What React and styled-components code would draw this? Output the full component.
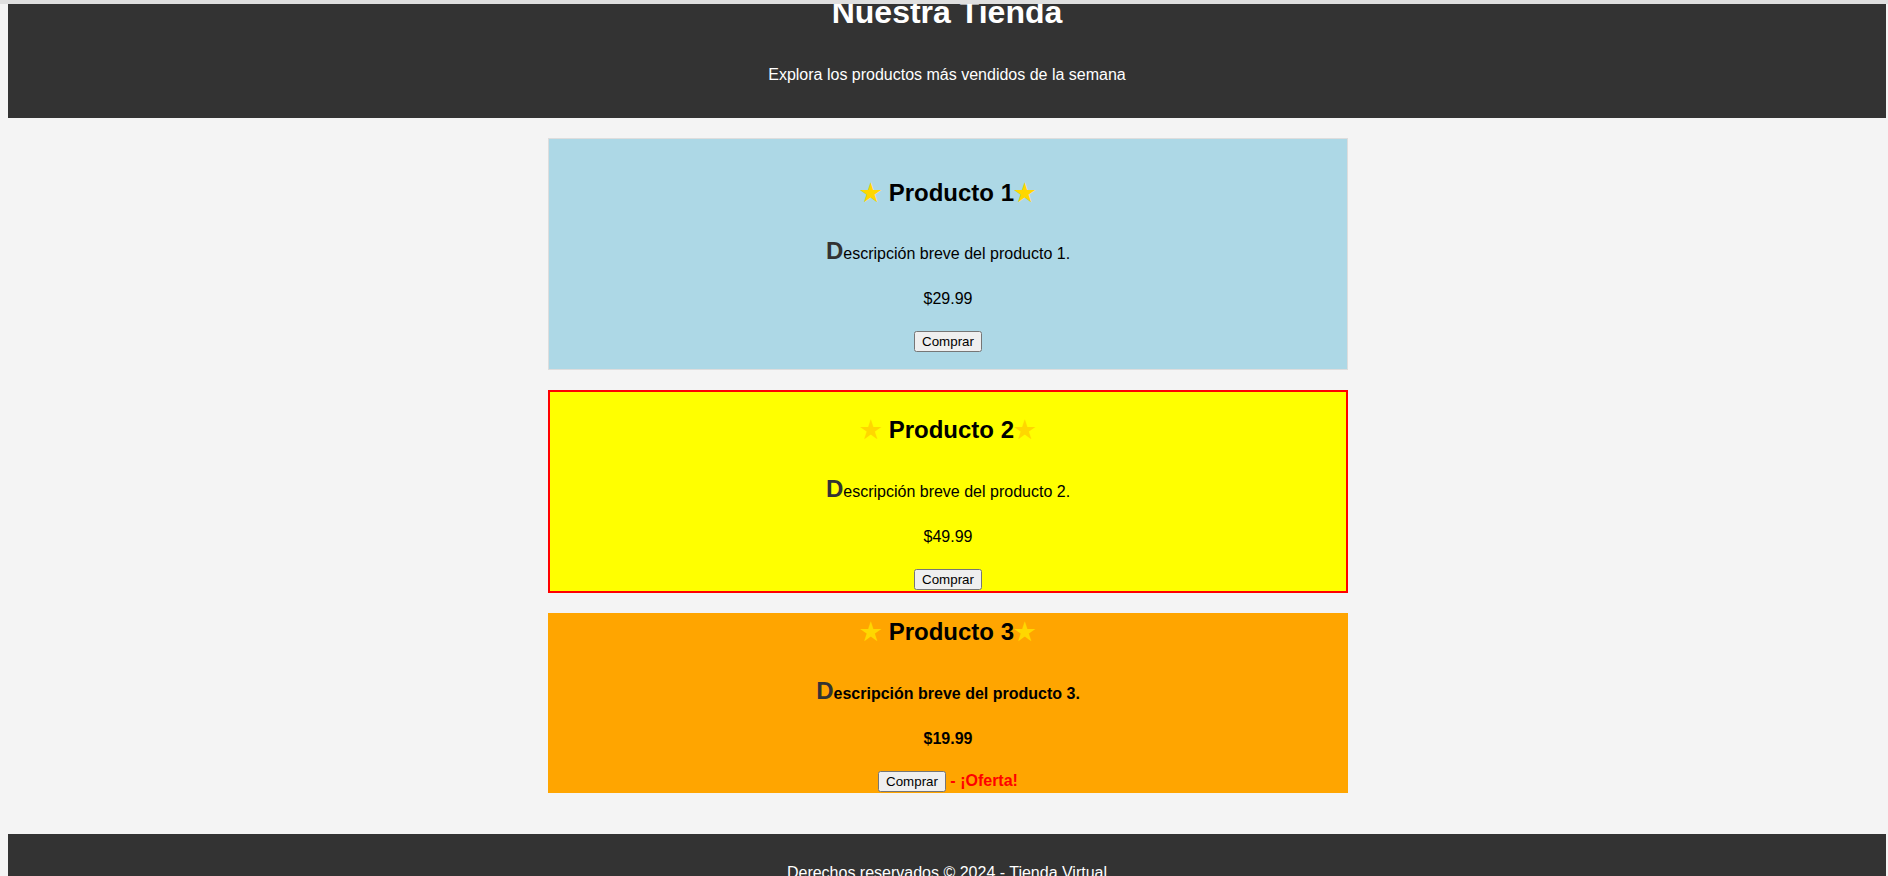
import React from "react";
import styled, { createGlobalStyle } from "styled-components";

const products = [
  { id: 1, name: "Producto 1", price: "$29.99", variant: "blue" },
  { id: 2, name: "Producto 2", price: "$49.99", variant: "featured" },
  { id: 3, name: "Producto 3", price: "$19.99", variant: "sale" },
];

const App = () => {
  return (
    <>
      <GlobalStyle />
      <TopEdge />
      <Header>
        <h1>Nuestra Tienda</h1>
        <p>Explora los productos más vendidos de la semana</p>
      </Header>
      <Main>
        {products.map((p) => (
          <Card key={p.id} $variant={p.variant}>
            <Title>{p.name}</Title>
            <Description>Descripción breve del producto {p.id}.</Description>
            <Price>{p.price}</Price>
            <BuyButton>Comprar</BuyButton>
            {p.variant === "sale" && <Offer> - ¡Oferta!</Offer>}
          </Card>
        ))}
      </Main>
      <Footer>
        <p>Derechos reservados © 2024 - Tienda Virtual</p>
      </Footer>
    </>
  );
};

//styled components
const GlobalStyle = createGlobalStyle`
  body {
    margin: 0 2px 0 8px;
    background: #f4f4f4;
    font-family: "Liberation Sans", Arial, sans-serif;
    line-height: 1.6;
    color: #000;
  }
`;

const TopEdge = styled.div`
  position: fixed;
  top: 0;
  left: 0;
  right: 0;
  height: 4px;
  background: #dfdfdf;
`;

const Header = styled.header`
  background: #333;
  color: #fff;
  text-align: center;
  padding: 0 10px 30px;
  & h1 {
    font-size: 32px;
    margin: -13px 0 24px;
  }
  & p {
    margin: 0;
    font-size: 16px;
  }
`;

const Main = styled.main`
  padding: 0 0 21px 2px;
`;

const cardStyles = {
  blue: `
    background: lightblue;
    border: 1px solid #ddd;
    padding: 15px;
  `,
  featured: `
    background: yellow;
    border: 2px solid red;
    padding: 0;
  `,
  sale: `
    background: orange;
    border: none;
    padding: 0;
    font-weight: bold;
  `,
};

const Card = styled.div`
  box-sizing: border-box;
  width: 800px;
  margin: 20px auto;
  text-align: center;
  ${(p) => cardStyles[p.$variant]}
`;

const Title = styled.h2`
  font-size: 24px;
  font-weight: bold;
  margin: 19.92px 0;
  &::before {
    content: "★ ";
    color: gold;
  }
  &::after {
    content: "★";
    color: gold;
  }
`;

const Description = styled.p`
  margin: 16px 0;
  font-size: 16px;
  &::first-letter {
    font-size: 24px;
    font-weight: bold;
    color: #333;
  }
`;

const Price = styled.p`
  margin: 16px 0;
  font-size: 16px;
`;

const BuyButton = styled.button`
  font-family: "Liberation Sans", Arial, sans-serif;
  font-size: 13.33px;
  font-weight: normal;
`;

const Offer = styled.span`
  color: red;
  font-weight: bold;
`;

const Footer = styled.footer`
  background: #333;
  color: #fff;
  text-align: center;
  padding: 10px;
  & p {
    margin: 16px 0;
  }
`;

export default App;
